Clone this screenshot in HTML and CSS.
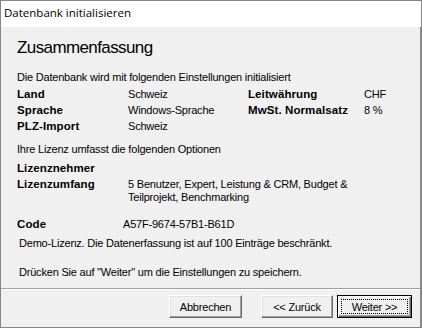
FILE: index.html
```html
<!DOCTYPE html>
<html lang="de">
<head>
<meta charset="utf-8">
<title>Datenbank initialisieren</title>
<link rel="stylesheet" href="styles.css">
</head>
<body>
<div class="window">
  <div class="titlebar">Datenbank initialisieren</div>
  <div class="client">
    <div class="main">
      <h1 class="heading">Zusammenfassung</h1>
      <p class="line intro">Die Datenbank wird mit folgenden Einstellungen initialisiert</p>
      <div class="settings">
        <div class="lbl">Land</div><div class="val">Schweiz</div>
        <div class="lbl">Leitwährung</div><div class="val">CHF</div>
        <div class="lbl">Sprache</div><div class="val">Windows-Sprache</div>
        <div class="lbl">MwSt. Normalsatz</div><div class="val">8 %</div>
        <div class="lbl">PLZ-Import</div><div class="val">Schweiz</div>
      </div>
      <p class="line options">Ihre Lizenz umfasst die folgenden Optionen</p>
      <div class="license">
        <div class="lbl">Lizenznehmer</div><div class="val"></div>
        <div class="lbl">Lizenzumfang</div><div class="val multi">5 Benutzer, Expert, Leistung &amp; CRM, Budget &amp;<br>Teilprojekt, Benchmarking</div>
      </div>
      <div class="code">
        <div class="lbl">Code</div><div class="val codeval">A57F-9674-57B1-B61D</div>
      </div>
      <p class="line demo">Demo-Lizenz. Die Datenerfassung ist auf 100 Einträge beschränkt.</p>
      <p class="line press">Drücken Sie auf "Weiter" um die Einstellungen zu speichern.</p>
    </div>
    <div class="buttons">
      <button class="btn cancel">Abbrechen</button>
      <button class="btn back">&lt;&lt; Zurück</button>
      <button class="btn next default"><span class="focus">Weiter &gt;&gt;</span></button>
    </div>
  </div>
</div>
</body>
</html>
```
FILE: styles.css
```css
html, body {
  margin: 0;
  padding: 0;
  background: #ffffff;
}
.window {
  width: 422px;
  height: 328px;
  box-sizing: border-box;
  border: 1px solid #858585;
  display: flex;
  flex-direction: column;
  font-family: "Liberation Sans", Arial, sans-serif;
  color: #000;
}
.titlebar {
  height: 26px;
  background: #ffffff;
  font-family: "Open Sans", "Noto Sans", sans-serif;
  font-size: 11.5px;
  line-height: 24px;
  padding-left: 3px;
  color: #000;
}
.client {
  flex: 1;
  background: #f0f0f0;
  border-right: 1px solid #8a8a8a;
  display: flex;
  flex-direction: column;
}
.main {
  height: 262px;
  box-sizing: border-box;
  padding: 10px 0 0 16px;
  font-size: 11px;
  letter-spacing: -0.2px;
  border-bottom: 1px solid #a0a0a0;
}
.heading {
  margin: 0;
  font-size: 17px;
  font-weight: normal;
  line-height: 22px;
  letter-spacing: -0.6px;
}
.line {
  margin: 0;
  line-height: 16px;
}
.intro { margin-top: 10px; }
.settings {
  display: grid;
  grid-template-columns: 111px 120px 116px auto;
  margin-top: 1px;
}
.lbl {
  font-weight: bold;
  font-size: 11.5px;
  line-height: 16px;
  letter-spacing: 0.1px;
}
.val {
  line-height: 16px;
}
.options { margin-top: 7px; }
.license {
  display: grid;
  grid-template-columns: 111px auto;
  margin-top: 3px;
}
.multi {
  line-height: 13px;
  padding-top: 2px;
}
.code {
  display: grid;
  grid-template-columns: 106px auto;
  margin-top: 12px;
}
.demo { margin-top: 3px; padding-left: 2px; }
.press { margin-top: 13px; padding-left: 2px; }
.buttons {
  flex: 1;
  display: flex;
  justify-content: flex-end;
  align-items: flex-start;
  padding: 5px 8px 0 0;
  border-top: 1px solid #ffffff;
}
.btn {
  height: 23px;
  box-sizing: border-box;
  background: #f0f0f0;
  font-family: "Liberation Sans", Arial, sans-serif;
  font-size: 11px;
  letter-spacing: -0.2px;
  color: #000;
  padding: 0;
  border: 1px solid;
  border-color: #ffffff #696969 #696969 #ffffff;
  box-shadow: inset -1px -1px 0 #a0a0a0, inset 1px 1px 0 #e3e3e3;
}
.cancel { width: 73px; margin-right: 19px; }
.back { width: 72px; margin-right: 4px; }
.next {
  width: 75px;
  border: 1px solid #000;
  box-shadow: inset 1px 1px 0 #ffffff, inset -1px -1px 0 #696969, inset -2px -2px 0 #a0a0a0;
  display: flex;
  align-items: center;
  justify-content: center;
  padding: 3px;
}
.focus {
  flex: 1;
  align-self: stretch;
  display: flex;
  align-items: center;
  justify-content: center;
  border: 1px dotted #000;
}
```
